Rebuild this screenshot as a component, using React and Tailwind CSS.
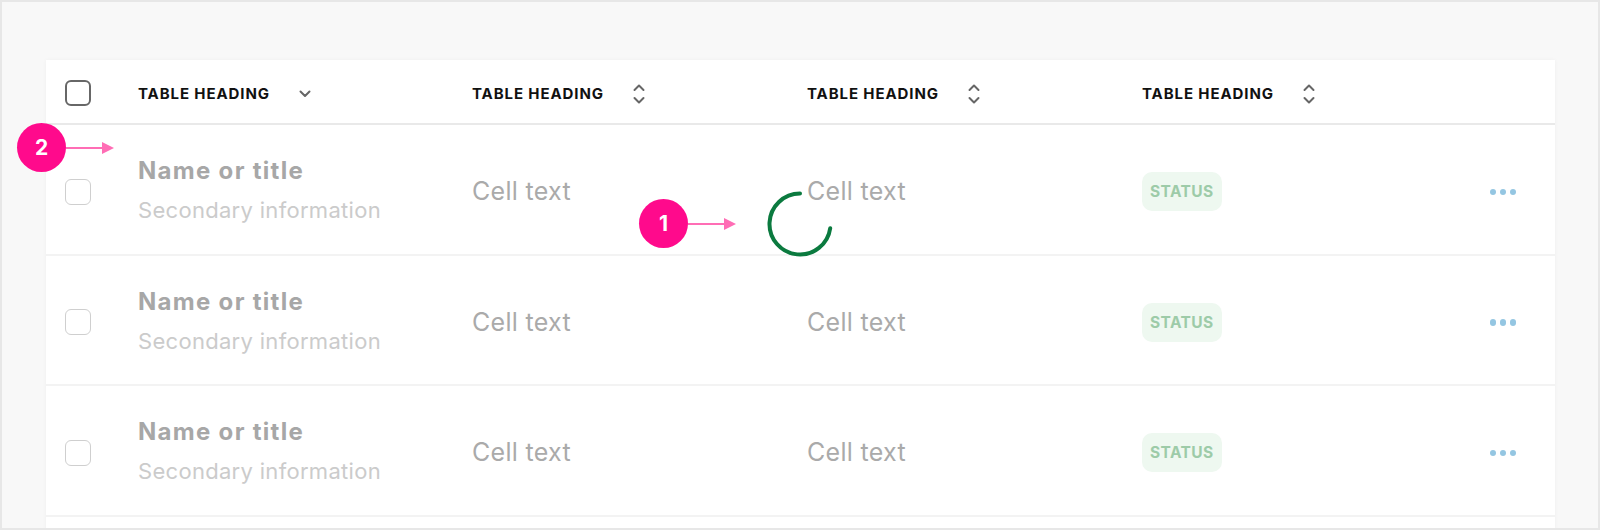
import React from 'react';

const ROWS = [1, 2, 3];
const HEADINGS = ['Table heading', 'Table heading', 'Table heading', 'Table heading'];

const GRID = 'grid grid-cols-[92px_334px_335px_335px_1fr_auto] items-center';

function SortIcon({ single }) {
    if (single) {
        return (
            <svg width="12" height="8" viewBox="0 0 12 8" fill="none">
                <polyline points="1.5,1.5 6,6 10.5,1.5" stroke="#666" strokeWidth="2" strokeLinecap="round" strokeLinejoin="round" />
            </svg>
        );
    }
    return (
        <svg width="12" height="20" viewBox="0 0 12 20" fill="none">
            <polyline points="1.5,6 6,1.5 10.5,6" stroke="#666" strokeWidth="2" strokeLinecap="round" strokeLinejoin="round" />
            <polyline points="1.5,14 6,18.5 10.5,14" stroke="#666" strokeWidth="2" strokeLinecap="round" strokeLinejoin="round" />
        </svg>
    );
}

function Marker({ n, className }) {
    // pink callout bubble with an arrow pointing right
    return (
        <div className={`absolute flex items-center ${className}`}>
            <div className="w-[49px] h-[49px] rounded-full bg-[#ff0a8c] flex items-center justify-center text-white text-[21px] font-bold">
                {n}
            </div>
            <div className="w-[36px] h-[2px] bg-[#ff6db5]"></div>
            <svg width="12" height="12" viewBox="0 0 12 12">
                <polygon points="0,0 12,6 0,12" fill="#ff6db5" />
            </svg>
        </div>
    );
}

export default function App() {
    return (
        <div className="relative w-[1600px] h-[530px] overflow-hidden bg-[#f8f8f8] border-2 border-[#e7e7e7] pt-[58px] pl-[44px] pr-[43px] font-['Inter',sans-serif]">
            <div className="bg-white h-[600px] shadow-[0_0_4px_rgba(0,0,0,0.04)]">
                {/* header */}
                <div className={`${GRID} h-[65px] pt-[5px] border-b-2 border-[#e9e9e9]`}>
                    <div className="pl-[19px] -mt-[2px]">
                        <div className="w-[26px] h-[26px] rounded-[6px] border-2 border-[#676767]"></div>
                    </div>
                    {HEADINGS.map((h, i) => (
                        <div key={i} className="flex items-center">
                            <span className="w-[161px] text-[15px] font-bold uppercase tracking-[0.9px] text-[#111]">{h}</span>
                            <SortIcon single={i === 0} />
                        </div>
                    ))}
                    <div></div>
                </div>

                {/* rows */}
                {ROWS.map(r => (
                    <div key={r} className={`${GRID} h-[130.5px] pt-[5px] border-b-2 border-[#f3f3f3]`}>
                        <div className="pl-[19px]">
                            <div className="w-[26px] h-[26px] rounded-[6px] border-[1.5px] border-[#cfcfcf]"></div>
                        </div>
                        <div className="flex flex-col -mt-[2px]">
                            <span className="text-[24px] leading-[30px] font-bold tracking-[1.3px] text-[#a7a7a7]">Name or title</span>
                            <span className="mt-[9px] text-[22px] leading-[30px] tracking-[0.3px] text-[#cbcbcb]">Secondary information</span>
                        </div>
                        <div className="text-[25px] tracking-[0.3px] text-[#aaaaaa]">Cell text</div>
                        <div className="text-[25px] tracking-[0.3px] text-[#aaaaaa]">Cell text</div>
                        <div>
                            <span className="inline-flex items-center h-[39px] px-2 rounded-[10px] bg-[#eef8f0] text-[15.5px] font-bold tracking-[0.4px] text-[#9dcba8]">
                                STATUS
                            </span>
                        </div>
                        <div className="flex gap-[3.5px] pr-[39px]">
                            <span className="w-[6.5px] h-[6.5px] rounded-full bg-[#94c6e2]"></span>
                            <span className="w-[6.5px] h-[6.5px] rounded-full bg-[#94c6e2]"></span>
                            <span className="w-[6.5px] h-[6.5px] rounded-full bg-[#94c6e2]"></span>
                        </div>
                    </div>
                ))}
            </div>

            {/* loading spinner over first row */}
            <svg className="absolute left-[763px] top-[187px]" width="70" height="70" viewBox="-35 -35 70 70" fill="none">
                <path d="M 0 -30.5 A 30.5 30.5 0 1 0 30.2 4.2" stroke="#0b7a3f" strokeWidth="4" strokeLinecap="round" />
            </svg>

            <Marker n="2" className="left-[15px] top-[121px]" />
            <Marker n="1" className="left-[637px] top-[197px]" />
        </div>
    );
}
